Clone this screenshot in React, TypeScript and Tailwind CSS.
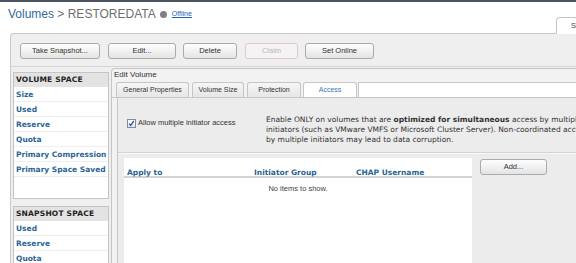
import React from 'react';

const sans = "font-['Liberation_Sans',Arial,sans-serif]";
const verd = "font-['DejaVu_Sans',Verdana,sans-serif]";

function Btn({ label, w, disabled = false, className = '' }: { label: string; w: string; disabled?: boolean; className?: string }) {
  return (
    <div
      className={`${sans} ${w} h-[16px] shrink-0 flex items-center justify-center rounded-[3px] border text-[7.5px] leading-none ${
        disabled
          ? 'border-[#e3c8c8] text-[#b8b8b8] bg-[#f4f4f4]'
          : 'border-[#ababab] text-[#333] bg-linear-to-b from-[#fefefe] to-[#e4e4e4]'
      } ${className}`}
    >
      {label}
    </div>
  );
}

function SpaceBox({ title, items, h, className = '' }: { title: string; items: string[]; h: string; className?: string }) {
  return (
    <div className={`shrink-0 border border-[#c4c4c4] bg-white overflow-hidden ${h} ${className}`}>
      <div className={`${verd} h-[14px] leading-[14px] bg-[#e3e3e3] pl-[2px] text-[7.5px] font-bold text-[#222] tracking-[0.2px] whitespace-nowrap`}>
        {title}
      </div>
      {items.map((i) => (
        <div
          key={i}
          className={`${verd} h-[15px] leading-[15px] border-b border-[#eeeeee] pl-[2px] text-[7.5px] font-bold text-[#2a6496] whitespace-nowrap`}
        >
          {i}
        </div>
      ))}
    </div>
  );
}

function Tab({ label, w, active = false, className = '' }: { label: string; w: string; active?: boolean; className?: string }) {
  return (
    <div
      className={`${sans} ${w} shrink-0 h-full flex items-center justify-center border-t border-l border-r border-[#c6c6c6] rounded-t-[3px] text-[7px] ${
        active ? 'bg-white text-[#3b74b8]' : 'bg-linear-to-b from-[#f6f6f6] to-[#e6e6e6] text-[#333]'
      } ${className}`}
    >
      {label}
    </div>
  );
}

export default function App() {
  return (
    <div className="w-[576px] h-[263px] overflow-hidden bg-white flex flex-col">
      <div className="h-[2px] shrink-0 bg-[#4c5562]" />
      <div className="h-[31px] shrink-0 flex">
        <div className="flex items-center pl-[8px] pt-[5px] self-start whitespace-nowrap">
          <span className={`${sans} text-[12px] leading-[14px]`}>
            <span className="text-[#2f6b9c]">Volumes</span>
            <span className="text-[#6e6e6e]"> &gt; RESTOREDATA</span>
          </span>
          <span className="ml-[4px] mt-[1px] w-[7px] h-[7px] rounded-full bg-[#808080]" />
          <span className={`${sans} ml-[5px] mt-[1px] text-[7px] underline text-[#2563b5]`}>Offline</span>
        </div>
        <div
          className={`${sans} relative z-10 ml-auto self-end mb-[-1px] w-[20px] h-[17px] border-l border-t border-[#c4c4c4] rounded-tl-[4px] bg-white pl-[14px] text-[7.5px] leading-[16px] text-[#444] overflow-hidden`}
        >
          S
        </div>
      </div>

      <div className="flex-1 min-h-0 ml-[10px] border-l border-t border-[#c9c9c9] rounded-tl-[4px] bg-[#efefef] flex flex-col overflow-hidden">
        <div className="h-[33px] shrink-0 border-b border-[#d6d6d6] flex items-start pt-[9px] pl-[9px]">
          <Btn label="Take Snapshot..." w="w-[80px]" />
          <Btn label="Edit..." w="w-[68px]" className="ml-[8px]" />
          <Btn label="Delete" w="w-[54px]" className="ml-[7px]" />
          <Btn label="Claim" w="w-[53px]" disabled className="ml-[8px]" />
          <Btn label="Set Online" w="w-[69px]" className="ml-[7px]" />
        </div>

        <div className="flex-1 min-h-0 flex">
          <div className="shrink-0 w-[96px] ml-[2px] mt-[5px] flex flex-col">
            <SpaceBox
              title="VOLUME SPACE"
              h="h-[127px]"
              items={['Size', 'Used', 'Reserve', 'Quota', 'Primary Compression', 'Primary Space Saved']}
            />
            <SpaceBox title="SNAPSHOT SPACE" h="h-[80px]" className="mt-[7px]" items={['Used', 'Reserve', 'Quota']} />
          </div>

          <div className="flex-1 min-w-0 ml-[2px] mt-[1px] border-l border-t border-[#c6c6c6] rounded-tl-[4px] bg-[#f2f2f2] flex flex-col">
            <div className={`${sans} h-[13px] shrink-0 pl-[2px] text-[8px] leading-[12px] text-[#333]`}>Edit Volume</div>
            <div className="h-[16px] shrink-0 flex items-stretch border-b border-[#c6c6c6] pl-[4px]">
              <Tab label="General Properties" w="w-[73px]" />
              <Tab label="Volume Size" w="w-[52px]" className="ml-[3px]" />
              <Tab label="Protection" w="w-[54px]" className="ml-[3px]" />
              <Tab label="Access" w="w-[54px]" active className="ml-[2px]" />
              <div className="flex-1 ml-[1px] bg-white border-t border-l border-[#c6c6c6]" />
            </div>
            <div className="flex-1 min-h-0 ml-[5px] border-l border-[#c6c6c6] bg-[#ececec] flex flex-col">
              <div className="flex pt-[17px] shrink-0">
                <div className="w-[148px] shrink-0 pl-[9px]">
                  <div className="flex items-center h-[10px] mt-[3px] whitespace-nowrap">
                    <svg width="9" height="9" viewBox="0 0 9 9" className="shrink-0">
                      <defs>
                        <linearGradient id="cb" x1="0" y1="0" x2="0" y2="1">
                          <stop offset="0" stopColor="#ffffff" />
                          <stop offset="1" stopColor="#dde3ea" />
                        </linearGradient>
                      </defs>
                      <rect x="0.5" y="0.5" width="8" height="8" fill="url(#cb)" stroke="#7f8c99" />
                      <path d="M2.2 4.6 L3.7 6.4 L6.9 1.9" fill="none" stroke="#2b56a6" strokeWidth="1.3" />
                    </svg>
                    <span className={`${sans} ml-[2px] text-[7.5px] leading-[10px] text-[#333]`}>
                      Allow multiple initiator access
                    </span>
                  </div>
                </div>
                <div className={`${verd} shrink-0 whitespace-nowrap text-[7.5px] leading-[10px] text-[#333]`}>
                  Enable ONLY on volumes that are <b>optimized for simultaneous</b> access by multiple
                  <br />
                  initiators (such as VMware VMFS or Microsoft Cluster Server). Non-coordinated access
                  <br />
                  by multiple initiators may lead to data corruption.
                </div>
              </div>
              <div className="shrink-0 mt-[7px] h-px bg-[#d4d4d4]" />
              <div className="shrink-0 h-px bg-[#f8f8f8]" />
              <div className="flex-1 min-h-0 flex mt-[4px]">
                <div className="w-[348px] shrink-0 ml-[6px] bg-white flex flex-col">
                  <div className={`${verd} h-[20px] shrink-0 flex pt-[10px] text-[7.5px] leading-[10px] font-bold text-[#2a6496] border-b-2 border-[#d2d2d2] whitespace-nowrap`}>
                    <div className="w-[130px] pl-[3px]">Apply to</div>
                    <div className="w-[102px]">Initiator Group</div>
                    <div>CHAP Username</div>
                  </div>
                  <div className={`${sans} pt-[6px] text-center text-[7.5px] leading-[10px] text-[#444]`}>No items to show.</div>
                </div>
                <Btn label="Add..." w="w-[67px]" className="ml-[8px] mt-[1px] h-[15px]" />
              </div>
            </div>
          </div>
        </div>
      </div>
    </div>
  );
}
